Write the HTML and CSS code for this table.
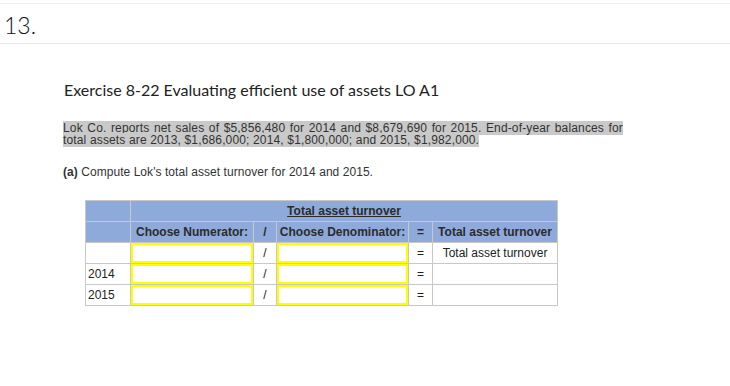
FILE: index.html
```html
<!DOCTYPE html>
<html>
<head>
<meta charset="utf-8">
<link rel="stylesheet" href="styles.css">
</head>
<body>
<div class="qhead">13.</div>
<div class="content">
  <h2 class="title">Exercise 8-22 Evaluating efficient use of assets LO A1</h2>
  <p class="intro"><span class="hl">Lok Co. reports net sales of $5,856,480 for 2014 and $8,679,690 for 2015. End-of-year balances for total assets are 2013, $1,686,000; 2014, $1,800,000; and 2015, $1,982,000.</span></p>
  <p class="part"><b>(a)</b> Compute Lok's total asset turnover for 2014 and 2015.</p>
  <table class="grid">
    <colgroup>
      <col class="c1"><col class="c2"><col class="c3"><col class="c4"><col class="c5"><col class="c6">
    </colgroup>
    <tr class="hdr">
      <th></th>
      <th colspan="5"><u>Total asset turnover</u></th>
    </tr>
    <tr class="hdr">
      <th></th>
      <th>Choose Numerator:</th>
      <th>/</th>
      <th>Choose Denominator:</th>
      <th>=</th>
      <th>Total asset turnover</th>
    </tr>
    <tr>
      <td></td>
      <td class="inp"><div class="box"></div></td>
      <td class="op">/</td>
      <td class="inp"><div class="box"></div></td>
      <td class="op">=</td>
      <td class="res">Total asset turnover</td>
    </tr>
    <tr>
      <td class="yr">2014</td>
      <td class="inp"><div class="box"></div></td>
      <td class="op">/</td>
      <td class="inp"><div class="box"></div></td>
      <td class="op">=</td>
      <td></td>
    </tr>
    <tr>
      <td class="yr">2015</td>
      <td class="inp"><div class="box"></div></td>
      <td class="op">/</td>
      <td class="inp"><div class="box"></div></td>
      <td class="op">=</td>
      <td></td>
    </tr>
  </table>
</div>
</body>
</html>
```
FILE: styles.css
```css
html, body { margin: 0; padding: 0; background: #fff; }
body { color: #333; }
.qhead {
  margin-top: 3px;
  border-top: 1px solid #ececec;
  border-bottom: 1px solid #e6e6e6;
  height: 41px;
  box-sizing: border-box;
  padding: 8px 0 0 4px;
  font-family: Lato, "Open Sans", sans-serif;
  font-weight: 300;
  font-size: 23px;
  line-height: 26px;
  color: #111;
}
.content { padding-left: 63px; }
.title {
  margin: 37px 0 0 1px;
  font-family: Lato, sans-serif;
  font-weight: 400;
  font-size: 16px;
  line-height: 18px;
  color: #222;
}
.intro {
  margin: 23px 0 0 0;
  width: 560px;
  text-align: justify;
  font-family: "Liberation Sans", Arial, sans-serif;
  font-size: 12px;
  line-height: 12px;
  letter-spacing: 0.15px;
  color: #333;
}
.hl { background: #c9c9c9; }
.part {
  margin: 19px 0 0 0;
  font-family: "Liberation Sans", Arial, sans-serif;
  font-size: 12px;
  line-height: 14px;
  color: #333;
  letter-spacing: 0.05px;
}
.grid {
  margin: 21px 0 0 22px;
  border-collapse: collapse;
  table-layout: fixed;
  width: 472px;
  font-family: "Liberation Sans", Arial, sans-serif;
  font-size: 12px;
  color: #222;
}
.c1 { width: 45px; }
.c2 { width: 123px; }
.c3 { width: 23px; }
.c4 { width: 132px; }
.c5 { width: 24px; }
.c6 { width: 125px; }
.grid th, .grid td {
  border: 1px solid #c8c8c8;
  height: 20px;
  padding: 0;
  box-sizing: border-box;
}
.grid tr { height: 21px; }
.hdr th {
  background: #8eaadb;
  font-weight: bold;
  color: #2b2b2b;
  text-align: center;
}
.op { text-align: center; }
.res { text-align: center; }
.yr { text-align: left; padding-left: 2px !important; }
.inp { padding: 0; }
.box {
  height: 20px;
  box-sizing: border-box;
  border: 2px solid #ffff00;
  background: #fff;
}
```
